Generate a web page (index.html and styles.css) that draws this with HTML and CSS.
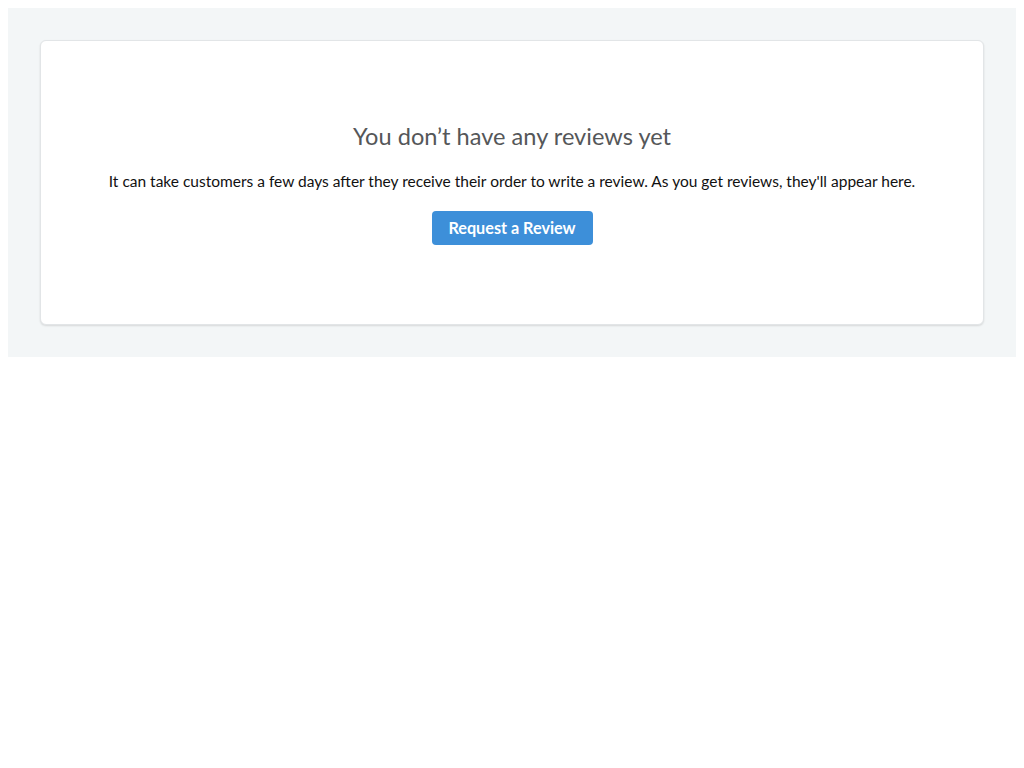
FILE: index.html
```html
<!DOCTYPE html>
<html>
<head>
<meta charset="utf-8">
<link rel="stylesheet" href="styles.css">
</head>
<body>
<div class="page">
  <div class="card">
    <h2 class="title">You don’t have any reviews yet</h2>
    <p class="text">It can take customers a few days after they receive their order to write a review. As you get reviews, they'll appear here.</p>
    <button class="btn">Request a Review</button>
  </div>
</div>
</body>
</html>
```
FILE: styles.css
```css
body {
  margin: 8px;
  font-family: Lato, "Open Sans", sans-serif;
  background: #fff;
}
.page {
  background: #f3f6f7;
  padding: 32px;
}
.card {
  background: #fff;
  border: 1px solid #e2e5e7;
  border-radius: 6px;
  box-shadow: 0 1px 2px rgba(0,0,0,0.12);
  padding: 81px 20px 79px;
  display: flex;
  flex-direction: column;
  align-items: center;
  text-align: center;
}
.title {
  margin: 0;
  font-size: 23.6px;
  font-weight: 400;
  line-height: 28px;
  color: #555759;
}
.text {
  margin: 19px 0 0;
  font-size: 15.5px;
  line-height: 24px;
  color: #111;
}
.btn {
  margin-top: 18px;
  height: 34px;
  width: 161px;
  padding: 0;
  border: none;
  border-radius: 4px;
  background: #3d8fd9;
  color: #fff;
  font-family: Lato, sans-serif;
  font-weight: 700;
  font-size: 16.2px;
  line-height: 32px;
}
```
